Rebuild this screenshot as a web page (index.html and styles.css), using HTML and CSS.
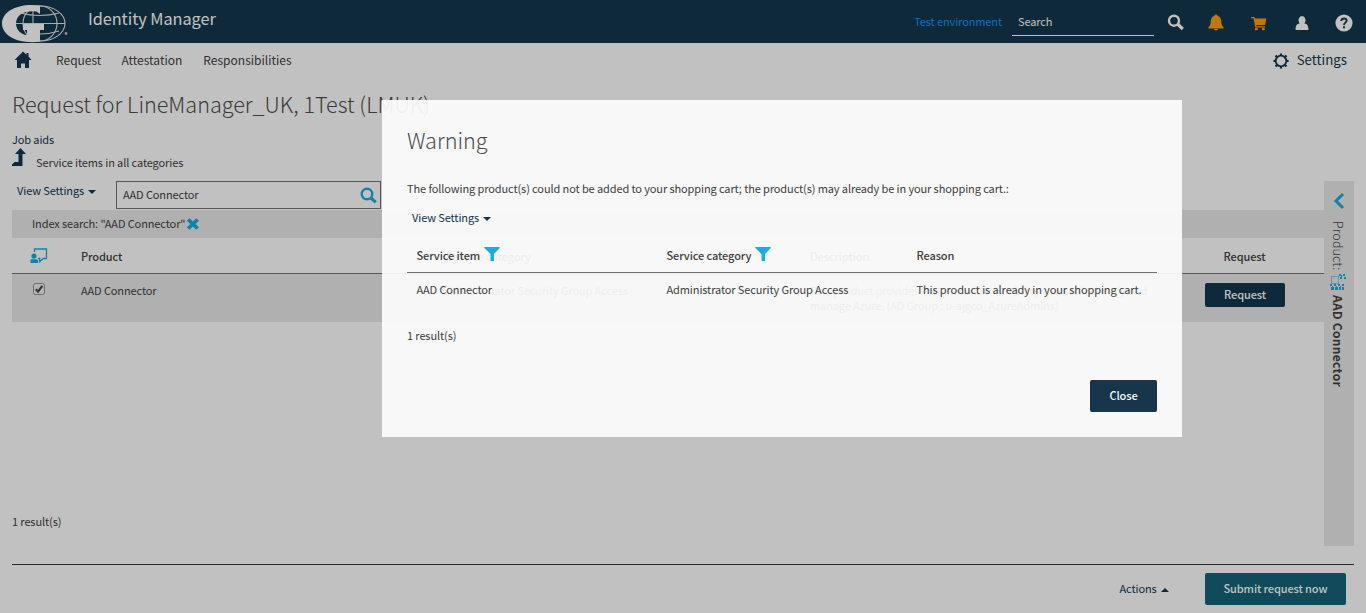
FILE: index.html
```html
<!DOCTYPE html>
<html lang="en">
<head>
<meta charset="utf-8">
<title>Identity Manager</title>
<link rel="stylesheet" href="styles.css">
</head>
<body>
<div class="page">
  <header class="topbar">
    <svg class="logo" width="68" height="40" viewBox="0 0 68 40">
      <g fill="none" stroke="#d8dde0" stroke-width="1.1">
        <ellipse cx="40" cy="19.500" rx="25" ry="17.500"/>
        <ellipse cx="40" cy="19.500" rx="17" ry="17.500"/>
        <path d="M33 2v18M15 19.500h50M20 9q20 5 39 0M40 30q10 0 19-3"/>
      </g>
      <path fill="#f8f8f8" d="M32 1q5 0 8 .8V10l-3.500-2.500C28 6 16 9 16 19.500c0 6.500 5 11 11 11.500v-5h-4v-6h21v6h-4v11.500q-3 .7-8 .7C14 38 2 30 2 19.500S14 1 32 1z"/>
      <circle cx="66" cy="29.500" r="1.400" fill="#bbb"/>
    </svg>
    <h1 class="brand">Identity Manager</h1>
    <span class="env">Test environment</span>
    <div class="search">Search</div>
    <svg class="i-search" width="18" height="18" viewBox="0 0 18 18"><circle cx="7" cy="6.700" r="5" fill="none" stroke="#f8f8f8" stroke-width="2.400"/><path d="M10.500 10l5.300 5" stroke="#f8f8f8" stroke-width="3.200"/></svg>
    <svg class="i-bell" width="16" height="18" viewBox="0 0 16 18"><path fill="#f89a0c" d="M8 .5c1 0 1.400.7 1.400 1.300 2.900.8 3.700 3 3.900 6 .2 3 .7 4.200 2.300 5.600v1.200H.4v-1.200C2 12 2.500 10.800 2.700 7.800c.2-3 1-5.200 3.900-6C6.600 1.200 7 .5 8 .5zM6 15h4q-.5 1.500-2 1.500T6 15z"/></svg>
    <svg class="i-cart" width="16" height="16" viewBox="0 0 16 16"><path fill="#f89a0c" d="M0 1h3.600l.6 1.500H15.500L14 9H5.300l.3 1.200H14v1.300H4.300L2.500 2.300H0zM4 12h2.700v2.300H4zM11 12h2.700v2.300H11z"/></svg>
    <svg class="i-user" width="14" height="16" viewBox="0 0 14 16"><path fill="#f8f8f8" d="M7 0a3.800 4.500 0 0 1 2.500 7.600C12.500 8 13.400 10 13.400 14H.6c0-4 .9-6 3.900-6.400A3.800 4.500 0 0 1 7 0z"/></svg>
    <svg class="i-help" width="18" height="18" viewBox="0 0 18 18"><circle cx="9" cy="9" r="8.600" fill="#f8f8f8"/><path d="M6.300 7c0-3.500 5.500-3.200 5.300-.3C11.500 8.600 9 8.700 9 11" fill="none" stroke="#13354b" stroke-width="1.900"/><path d="M8 12.300h2v2H8z" fill="#13354b"/></svg>
  </header>

  <nav class="nav">
    <svg class="home" width="18" height="18" viewBox="0 0 18 18"><path fill="#13354b" d="M9 .5l3.500 3.200V2h2v3.600L17.500 9H15v8h-4v-4.500H7V17H3V9H.5z"/></svg>
    <a class="nav-request">Request</a>
    <a class="nav-attest">Attestation</a>
    <a class="nav-resp">Responsibilities</a>
    <svg class="gear" width="16" height="16" viewBox="0 0 16 16"><circle cx="8" cy="8" r="5.300" fill="none" stroke="#13354b" stroke-width="1.800"/><g fill="none" stroke="#13354b" stroke-width="2.200"><path d="M8 .4v2M8 13.600v2M.4 8h2M13.600 8h2M2.500 2.500l1.400 1.400M12.100 12.100l1.400 1.400M2.500 13.500l1.400-1.400M12.100 3.900l1.400-1.400"/></g></svg>
    <a class="nav-settings">Settings</a>
  </nav>

  <main class="content">
    <h2 class="title">Request for LineManager_UK, 1Test (LMUK)</h2>
    <a class="jobaids">Job aids</a>
    <div class="category">
      <svg width="15" height="20" viewBox="0 0 15 20"><path fill="#13354b" d="M8.500 1l5.500 6h-3.500v12H0v-1.500L2.500 15h4V7H3z"/></svg>
      <span>Service items in all categories</span>
    </div>
    <div class="panels">
      <section class="results">
        <div class="tools">
          <a class="view">View Settings <i class="caret"></i></a>
          <div class="find"><span>AAD Connector</span>
            <svg width="18" height="18" viewBox="0 0 18 18"><circle cx="7" cy="7" r="5.300" fill="none" stroke="#18a8d8" stroke-width="2.400"/><path d="M10.800 10.800l5 4.600" stroke="#18a8d8" stroke-width="3.200"/></svg>
          </div>
        </div>
        <div class="filter"><span>Index search: "AAD Connector"</span>
          <svg width="14" height="14" viewBox="0 0 14 14"><path d="M2.200 2.500l9.400 9M11.600 2.500l-9.400 9" stroke="#18a8d8" stroke-width="3.800"/></svg>
        </div>
        <div class="grid head">
          <svg class="person" width="18" height="16" viewBox="0 0 18 16"><path d="M4.500 4V1h12v9.500h-3.200l-3.600 3.300v-3.300H8" fill="none" stroke="#18a8d8" stroke-width="1.300"/><circle cx="4" cy="8" r="2.600" fill="#18a8d8"/><path d="M1 11.300h5.500L8 12v3H.5v-3z" fill="#18a8d8"/></svg>
          <b>Product</b><b>Service category</b><b>Description</b><b class="mid">Request</b>
        </div>
        <div class="grid row">
          <svg class="check" width="12" height="12" viewBox="0 0 12 12"><rect x=".5" y=".5" width="11" height="11" rx="2" fill="#e6e6e6" stroke="#8a8a8a"/><path d="M2.800 6.300l2.200 2.300L9.300 2.800" fill="none" stroke="#444" stroke-width="2.200"/></svg>
          <span>AAD Connector</span><span>Administrator Security Group Access</span>
          <span>This product provides the user with the ability to install, modify and<br>manage Azure. (AD Group : u-ajgco_AzureAdmins)</span>
          <button class="btn small">Request</button>
        </div>
        <p class="count">1 result(s)</p>
      </section>
      <aside class="side">
        <svg class="chev" width="12" height="18" viewBox="0 0 12 18"><path d="M10 2L3 9l7 7" fill="none" stroke="#18a8d8" stroke-width="3"/></svg>
        <div class="vertical">
          <span class="side-label">Product:</span>
          <svg class="side-icon" width="16" height="17" viewBox="0 0 16 17"><path d="M1.500 2.500h7v7h-7z" fill="none" stroke="#18a8d8" stroke-dasharray="1 1"/><g fill="#18a8d8"><path d="M9 0h2v2H9zM13 0h2v2h-2zM10 3h2v2h-2zM14 3h2v2h-2zM11 1h1v2h-1zM0 10h2v2H0zM4 10h2v2H4zM8 10h2v2H8zM12 10h2v2h-2zM1 13h3v3H1zM5 13h3v3H5zM9 13h2v3H9zM12 13h2v3h-2zM2 12h1v1H2zM6 12h1v1H6zM10 12h1v1h-1z"/></g></svg>
          <b class="side-name">AAD Connector</b>
        </div>
      </aside>
    </div>
  </main>
  <footer class="footer">
    <a class="actions">Actions <i class="caret up"></i></a>
    <button class="btn submit">Submit request now</button>
  </footer>
</div>

<div class="overlay">
  <section class="dialog">
    <h2 class="dialog-title">Warning</h2>
    <p class="message">The following product(s) could not be added to your shopping cart; the product(s) may already be in your shopping cart.:</p>
    <a class="view dialog-view">View Settings <i class="caret"></i></a>
    <div class="dgrid dhead">
      <b>Service item <svg width="16" height="14" viewBox="0 0 16 14"><path fill="#1badde" d="M.3 0h15.400v1L10 7v7H6.500V7L.3 1z"/></svg></b>
      <b>Service category <svg width="16" height="14" viewBox="0 0 16 14"><path fill="#1badde" d="M.3 0h15.400v1L10 7v7H6.500V7L.3 1z"/></svg></b>
      <b>Reason</b>
    </div>
    <div class="dgrid drow"><span>AAD Connector</span><span>Administrator Security Group Access</span><span>This product is already in your shopping cart.</span></div>
    <p class="dcount">1 result(s)</p>
    <button class="btn close">Close</button>
  </section>
</div>
</body>
</html>
```
FILE: styles.css
```css
* { box-sizing: border-box; }
body {
  margin: 0;
  background: #f8f8f8;
  color: #404040;
  font: 11px/16px "Noto Sans CJK SC", "Open Sans", sans-serif;
  letter-spacing: -.11px;
}
h1, h2, p { margin: 0; font-weight: 400; }
b { font-weight: 500; }
svg { display: block; flex: none; }
span, a, b, h1, h2, p { white-space: nowrap; }
button { border: 0; padding: 0; font: inherit; letter-spacing: inherit; }

.page { height: 613px; display: flex; flex-direction: column; overflow: hidden; }
.topbar { height: 43px; flex: none; display: flex; background: #13354b; color: #f8f8f8; }
.logo { margin-top: 4px; }
.brand { margin: 7px 0 0 20px; font-size: 16.3px; line-height: 22px; letter-spacing: -.05px; }
.env { margin: 13px 10px 0 auto; color: #1191e4; }
.search { width: 142px; height: 23px; margin-top: 13px; padding-left: 6px; border-bottom: 1px solid #f8f8f8; }
.i-search { margin: 14px 1px 0 13px; }
.i-bell { margin: 14px 0 0 22px; }
.i-cart { margin: 16px 0 0 27px; }
.i-user { margin: 16px 0 0 28px; }
.i-help { margin: 14px 13px 0 26px; }

.nav { height: 43px; flex: none; display: flex; padding-left: 14px; font-size: 12px; line-height: 18px; letter-spacing: 0; }
.home { margin-top: 8px; }
.nav a { margin-top: 8px; }
.nav-request { margin-left: 24px; }
.nav-attest { margin-left: 20px; }
.nav-resp { margin-left: 21px; }
.gear { margin: 10px 8px 0 auto; }
.nav .nav-settings { margin-right: 19px; font-size: 13.3px; color: #13354b; }

.content { flex: 1; padding: 3px 12px 0; display: flex; flex-direction: column; }
.title, .dialog-title { font-size: 21.6px; line-height: 30px; font-weight: 200; letter-spacing: 0; color: #4c4c4c; }
.jobaids { margin-top: 12px; color: #13354b; }
.category { display: flex; height: 20px; gap: 9px; }
.category span { margin-top: 7px; }
.panels { display: flex; margin-top: 14px; height: 365px; }
.results { flex: 1; display: flex; flex-direction: column; }
.tools { display: flex; height: 29px; }
.view { color: #13354b; }
.tools .view { width: 80px; margin: 1px 0 0 5px; }
.caret { display: inline-block; margin-left: 2px; vertical-align: 1px; border: 4px solid transparent; border-top-color: #13354b; border-bottom: 0; }
.caret.up { border-top: 0; border-bottom: 4px solid #13354b; }
.find { display: flex; justify-content: space-between; width: 265px; height: 28px; margin-left: 19px; padding: 4px 2px 0 6px; border: 1px solid #707070; }
.find svg { margin-top: 1px; }
.filter { display: flex; height: 28px; padding: 5px 0 0 20px; gap: 1px; background: #e2e2e2; }
.filter svg { margin-top: 2px; }
.grid { display: grid; grid-template-columns: 69px 365px 364px 367px 147px; }
.head { height: 36px; padding-top: 10px; border-bottom: 1px solid #707070; }
.person { margin-left: 18px; }
.mid { text-align: center; padding-right: 12px; }
.row { height: 48px; padding-top: 9px; background: #e2e2e2; line-height: 15px; }
.check { margin-left: 21px; }
.btn { background: #13354b; color: #f8f8f8; border-radius: 2px; font-weight: 500; flex: none; padding-bottom: 2px; }
.small { width: 80px; height: 24px; margin-left: 28px; }
.count { margin-top: 191px; }
.side { width: 30px; background: #e2e2e2; }
.chev { margin: 11px 0 0 9px; }
.vertical { writing-mode: vertical-rl; width: 30px; height: 180px; margin-top: 11px; padding-right: 3px; display: flex; align-items: center; line-height: 18px; font-size: 12.5px; }
.side-label { font-weight: 300; letter-spacing: .15px; }
.side-icon { margin: 4px 0; }
.side-name { font-weight: 700; font-size: 12px; letter-spacing: .3px; }

.footer { height: 49px; flex: none; margin: 0 12px; display: flex; border-top: 1px solid #333; }
.actions { margin: 15px 36px 0 auto; color: #13354b; }
.submit { width: 141px; height: 32px; margin: 8px 8px 0 0; background: #155f75; }

.overlay { position: absolute; inset: 0; background: rgba(0, 0, 0, .22); }
.dialog { width: 800px; height: 337px; margin: 100px 0 0 382px; padding: 25px; display: flex; flex-direction: column; background: rgba(252, 252, 252, .93); }
.message { margin-top: 25px; }
.dialog-view { margin: 13px 0 0 5px; }
.dgrid { display: grid; grid-template-columns: 250px 250px 1fr; padding-left: 9.5px; }
.dhead { height: 32px; margin-top: 16px; border-bottom: 1px solid #707070; padding-top: 6px; }
.dhead b { display: flex; gap: 4px; }
.drow { margin-top: 8px; }
.dcount { margin-top: 30px; }
.close { width: 67px; height: 32px; margin: 37px 0 0 auto; background: #17364c; }
```
